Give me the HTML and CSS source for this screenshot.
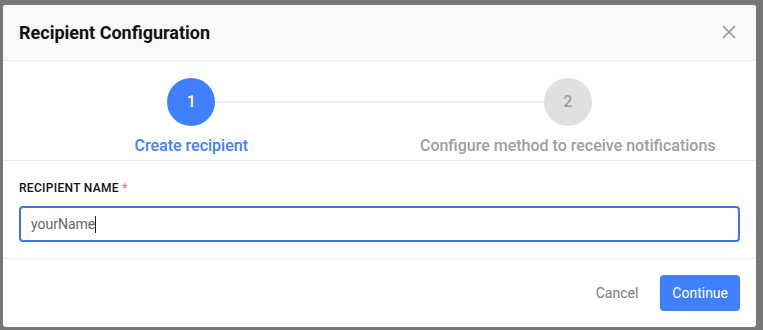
FILE: index.html
```html
<!DOCTYPE html>
<html lang="en">
<head>
    <meta charset="UTF-8">
    <meta name="viewport" content="width=device-width, initial-scale=1.0">
    <title>Recipient Configuration</title>
    <link rel="stylesheet" href="styles.css">
</head>
<body>
    <div class="modal">
        <div class="modal-header">
            <h2>Recipient Configuration</h2>
            <button class="close-btn" aria-label="Close">
                <svg width="14" height="14" viewBox="0 0 14 14"><path d="M1 1L13 13M13 1L1 13" stroke="#9a9a9a" stroke-width="1.6" fill="none"/></svg>
            </button>
        </div>

        <div class="stepper">
            <div class="step active">
                <div class="step-circle">1</div>
                <div class="step-label">Create recipient</div>
            </div>
            <div class="step">
                <div class="step-circle">2</div>
                <div class="step-label">Configure method to receive notifications</div>
            </div>
        </div>

        <div class="modal-body">
            <label class="field-label" for="recipient-name">Recipient Name <span class="required">*</span></label>
            <div class="text-input" id="recipient-name">yourName<span class="caret"></span></div>
        </div>

        <div class="modal-footer">
            <button class="cancel-btn">Cancel</button>
            <button class="continue-btn">Continue</button>
        </div>
    </div>
</body>
</html>
```

FILE: styles.css
```css
body {
    margin: 0;
    background-color: #777777;
    font-family: Roboto, 'Liberation Sans', Arial, sans-serif;
}
.modal {
    margin: 5px 0 0 3px;
    width: 753px;
    height: 322px;
    background-color: #ffffff;
    border-radius: 3px;
    overflow: hidden;
    display: flex;
    flex-direction: column;
}
.modal-header {
    height: 56px;
    box-sizing: border-box;
    background-color: #f9f9f9;
    border-bottom: 1px solid #e8e8e8;
    display: flex;
    align-items: center;
    justify-content: space-between;
    padding: 0 20px 0 16px;
}
.modal-header h2 {
    margin: 0;
    font-size: 18px;
    font-weight: 700;
    color: #111111;
}
.close-btn {
    background: none;
    border: none;
    padding: 0;
    width: 14px;
    height: 14px;
    display: flex;
    cursor: pointer;
}
.stepper {
    display: grid;
    grid-template-columns: 1fr 1fr;
    height: 101px;
    box-sizing: border-box;
    padding-top: 17px;
    border-bottom: 1px solid #ececec;
}
.step {
    display: flex;
    flex-direction: column;
    align-items: center;
    position: relative;
}
.step:first-child::after {
    content: "";
    position: absolute;
    top: 23px;
    left: calc(50% + 24px);
    width: calc(100% - 48px);
    height: 2px;
    background-color: #ececec;
}
.step-circle {
    width: 48px;
    height: 48px;
    border-radius: 50%;
    background-color: #e0e0e0;
    color: #9a9a9a;
    font-size: 16px;
    font-weight: 500;
    display: flex;
    align-items: center;
    justify-content: center;
}
.step-label {
    margin-top: 10px;
    font-size: 16px;
    font-weight: 500;
    color: #9e9e9e;
}
.step.active .step-circle {
    background-color: #4080ff;
    color: #ffffff;
}
.step.active .step-label {
    color: #4080ff;
}
.modal-body {
    padding: 20px 16px 16px;
    border-bottom: 1px solid #ececec;
}
.field-label {
    display: block;
    font-size: 12px;
    font-weight: 500;
    letter-spacing: 0.3px;
    text-transform: uppercase;
    color: #111111;
    margin-bottom: 11px;
}
.required {
    color: #ff7070;
}
.text-input {
    height: 36px;
    box-sizing: border-box;
    border: 2px solid #3b74e2;
    border-radius: 4px;
    padding: 0 10px;
    display: flex;
    align-items: center;
    font-size: 14px;
    color: #666666;
}
.caret {
    display: inline-block;
    width: 1px;
    height: 17px;
    background-color: #222222;
}
.modal-footer {
    display: flex;
    justify-content: flex-end;
    align-items: center;
    gap: 8px;
    padding: 16px 16px;
}
.cancel-btn {
    background: none;
    border: none;
    font-family: inherit;
    font-size: 14px;
    color: #777777;
    padding: 0 14px;
    height: 36px;
    cursor: pointer;
}
.continue-btn {
    background-color: #4080ff;
    border: none;
    border-radius: 4px;
    color: #ffffff;
    font-family: inherit;
    font-size: 14px;
    height: 36px;
    padding: 0 12px;
    cursor: pointer;
}
```
